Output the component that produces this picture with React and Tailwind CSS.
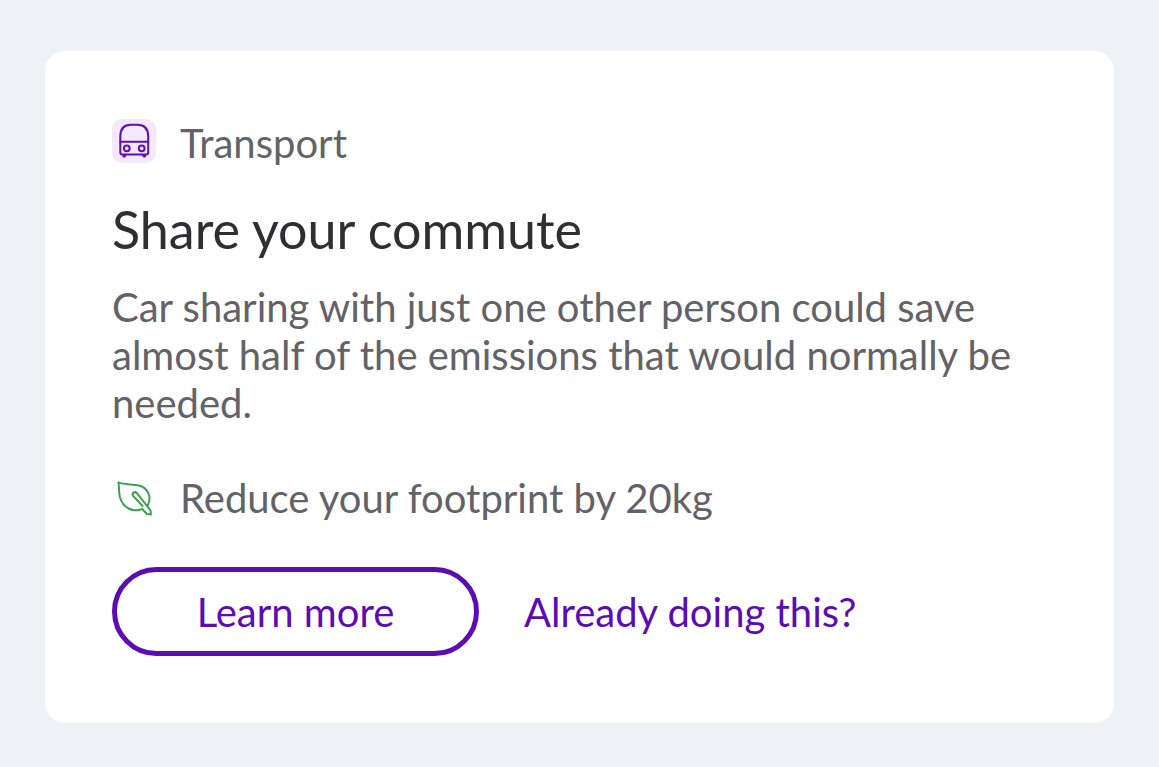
function BusIcon() {
  return (
    <svg viewBox="0 0 44 44" className="size-11" fill="none" stroke="#5f0fb8" strokeWidth="2" strokeLinejoin="round" strokeLinecap="round" aria-hidden="true">
      <path d="M8.300 33.500V17.500C8.300 9.500 12.500 5.800 19 5.800h6.500c6.500 0 10.700 3.700 10.700 11.700v16c0 1.400-.600 2-2 2H10.300c-1.400 0-2-.600-2-2z" />
      <path d="M8.300 22.800h27.900" />
      <circle cx="14.800" cy="29.300" r="2.900" />
      <circle cx="29.700" cy="29.300" r="2.900" />
      <path d="M11.500 36v1.500h1.300l.600-1.500M33 36v1.500h-1.300l-.600-1.500" />
    </svg>
  );
}

function LeafIcon() {
  return (
    <svg viewBox="0 0 44 44" className="size-11" fill="none" stroke="#3f9f52" strokeWidth="2" strokeLinejoin="round" strokeLinecap="round" aria-hidden="true">
      <path d="M35.600 29.700C40.200 20.500 35.800 12 27 9.500 20 7.800 13 9 6.400 6.400 7.400 11.500 6.500 16 8 21.500 11 31.500 20.500 37 30.300 33L34.800 38 38.900 38.400 38.500 34.300 24.900 17.200C22.700 14.800 19.300 17.200 21.200 19.900L30.500 30" />
    </svg>
  );
}

export default function App() {
  return (
    <main className="min-h-screen bg-[#f0f1f7] px-[45px] pt-[51px] pb-11 font-['Lato',sans-serif] text-[40px] leading-12 text-[#626267]">
      <article className="rounded-[20px] bg-white px-[67px] pt-[68px] pb-[67px]">
        <div className="flex items-start gap-6">
          <span className="size-11 shrink-0 rounded-[10px] bg-[#f3e9fa]">
            <BusIcon />
          </span>
          <span>Transport</span>
        </div>
        <h1 className="mt-[30px] text-[52px] leading-16 text-[#2f2f31]">Share your commute</h1>
        <p className="mt-[22px]">
          Car sharing with just one other person could save almost half of the emissions that would normally be needed.
        </p>
        <div className="mt-[47px] flex items-center gap-6">
          <LeafIcon />
          <span>Reduce your footprint by 20kg</span>
        </div>
        <div className="mt-[45px] flex items-center gap-[45px] text-[#5b0cb3]">
          <button type="button" className="h-[89px] w-[367px] rounded-full border-5 border-[#5b0cb3]">
            Learn more
          </button>
          <a href="#already-doing">Already doing this?</a>
        </div>
      </article>
    </main>
  );
}
